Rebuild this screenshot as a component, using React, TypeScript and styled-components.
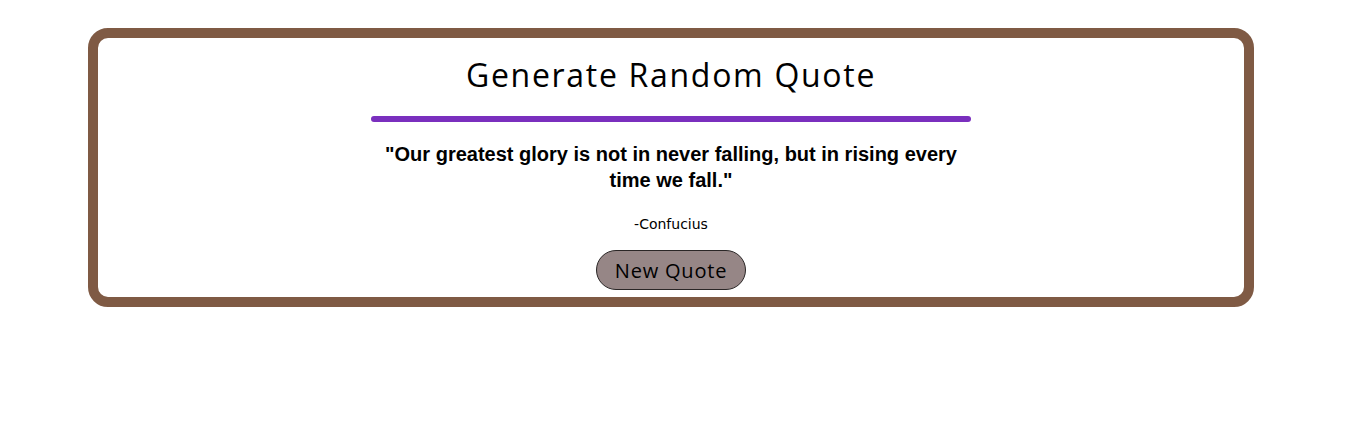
import React from "react";
import styled, { createGlobalStyle } from "styled-components";

const Global = createGlobalStyle`
  html, body { margin: 0; padding: 0; background: #ffffff; }
  body { font-family: "Open Sans", sans-serif; }
`;

const Page = styled.div`
  padding: 28px 0 0 88px;
`;

const Card = styled.main`
  box-sizing: border-box;
  width: 1166px;
  height: 279px;
  border: 10px solid #7f5a44;
  border-radius: 20px;
  display: flex;
  flex-direction: column;
  align-items: center;
  padding-top: 17px;
`;

const Title = styled.h1`
  margin: 0;
  font-family: "Open Sans", sans-serif;
  font-weight: 400;
  font-size: 32px;
  line-height: 40px;
  color: #000;
  letter-spacing: 1.7px;
`;

const Divider = styled.div`
  width: 600px;
  height: 6px;
  margin-top: 21px;
  border-radius: 3px;
  background: #7a2fbe;
`;

const Quote = styled.p`
  margin: 19px 0 0;
  width: 600px;
  text-align: center;
  font-family: "Liberation Sans", Arial, sans-serif;
  font-weight: 700;
  font-size: 20px;
  line-height: 26px;
  color: #000;
`;

const Author = styled.p`
  margin: 22px 0 0;
  font-family: "DejaVu Sans", sans-serif;
  font-size: 14px;
  line-height: 18px;
  color: #000;
`;

const Button = styled.button`
  margin-top: 17px;
  box-sizing: border-box;
  width: 150px;
  height: 40px;
  border: 1px solid #2a2626;
  border-radius: 20px;
  background: #968686;
  font-family: "Open Sans", sans-serif;
  font-size: 20px;
  letter-spacing: 0.8px;
  color: #000;
  cursor: pointer;
  padding: 0;
`;

export default function App() {
  return (
    <>
      <Global />
      <Page>
        <Card>
          <Title>Generate Random Quote</Title>
          <Divider />
          <Quote>
            "Our greatest glory is not in never falling, but in rising every time we fall."
          </Quote>
          <Author>-Confucius</Author>
          <Button>New Quote</Button>
        </Card>
      </Page>
    </>
  );
}
